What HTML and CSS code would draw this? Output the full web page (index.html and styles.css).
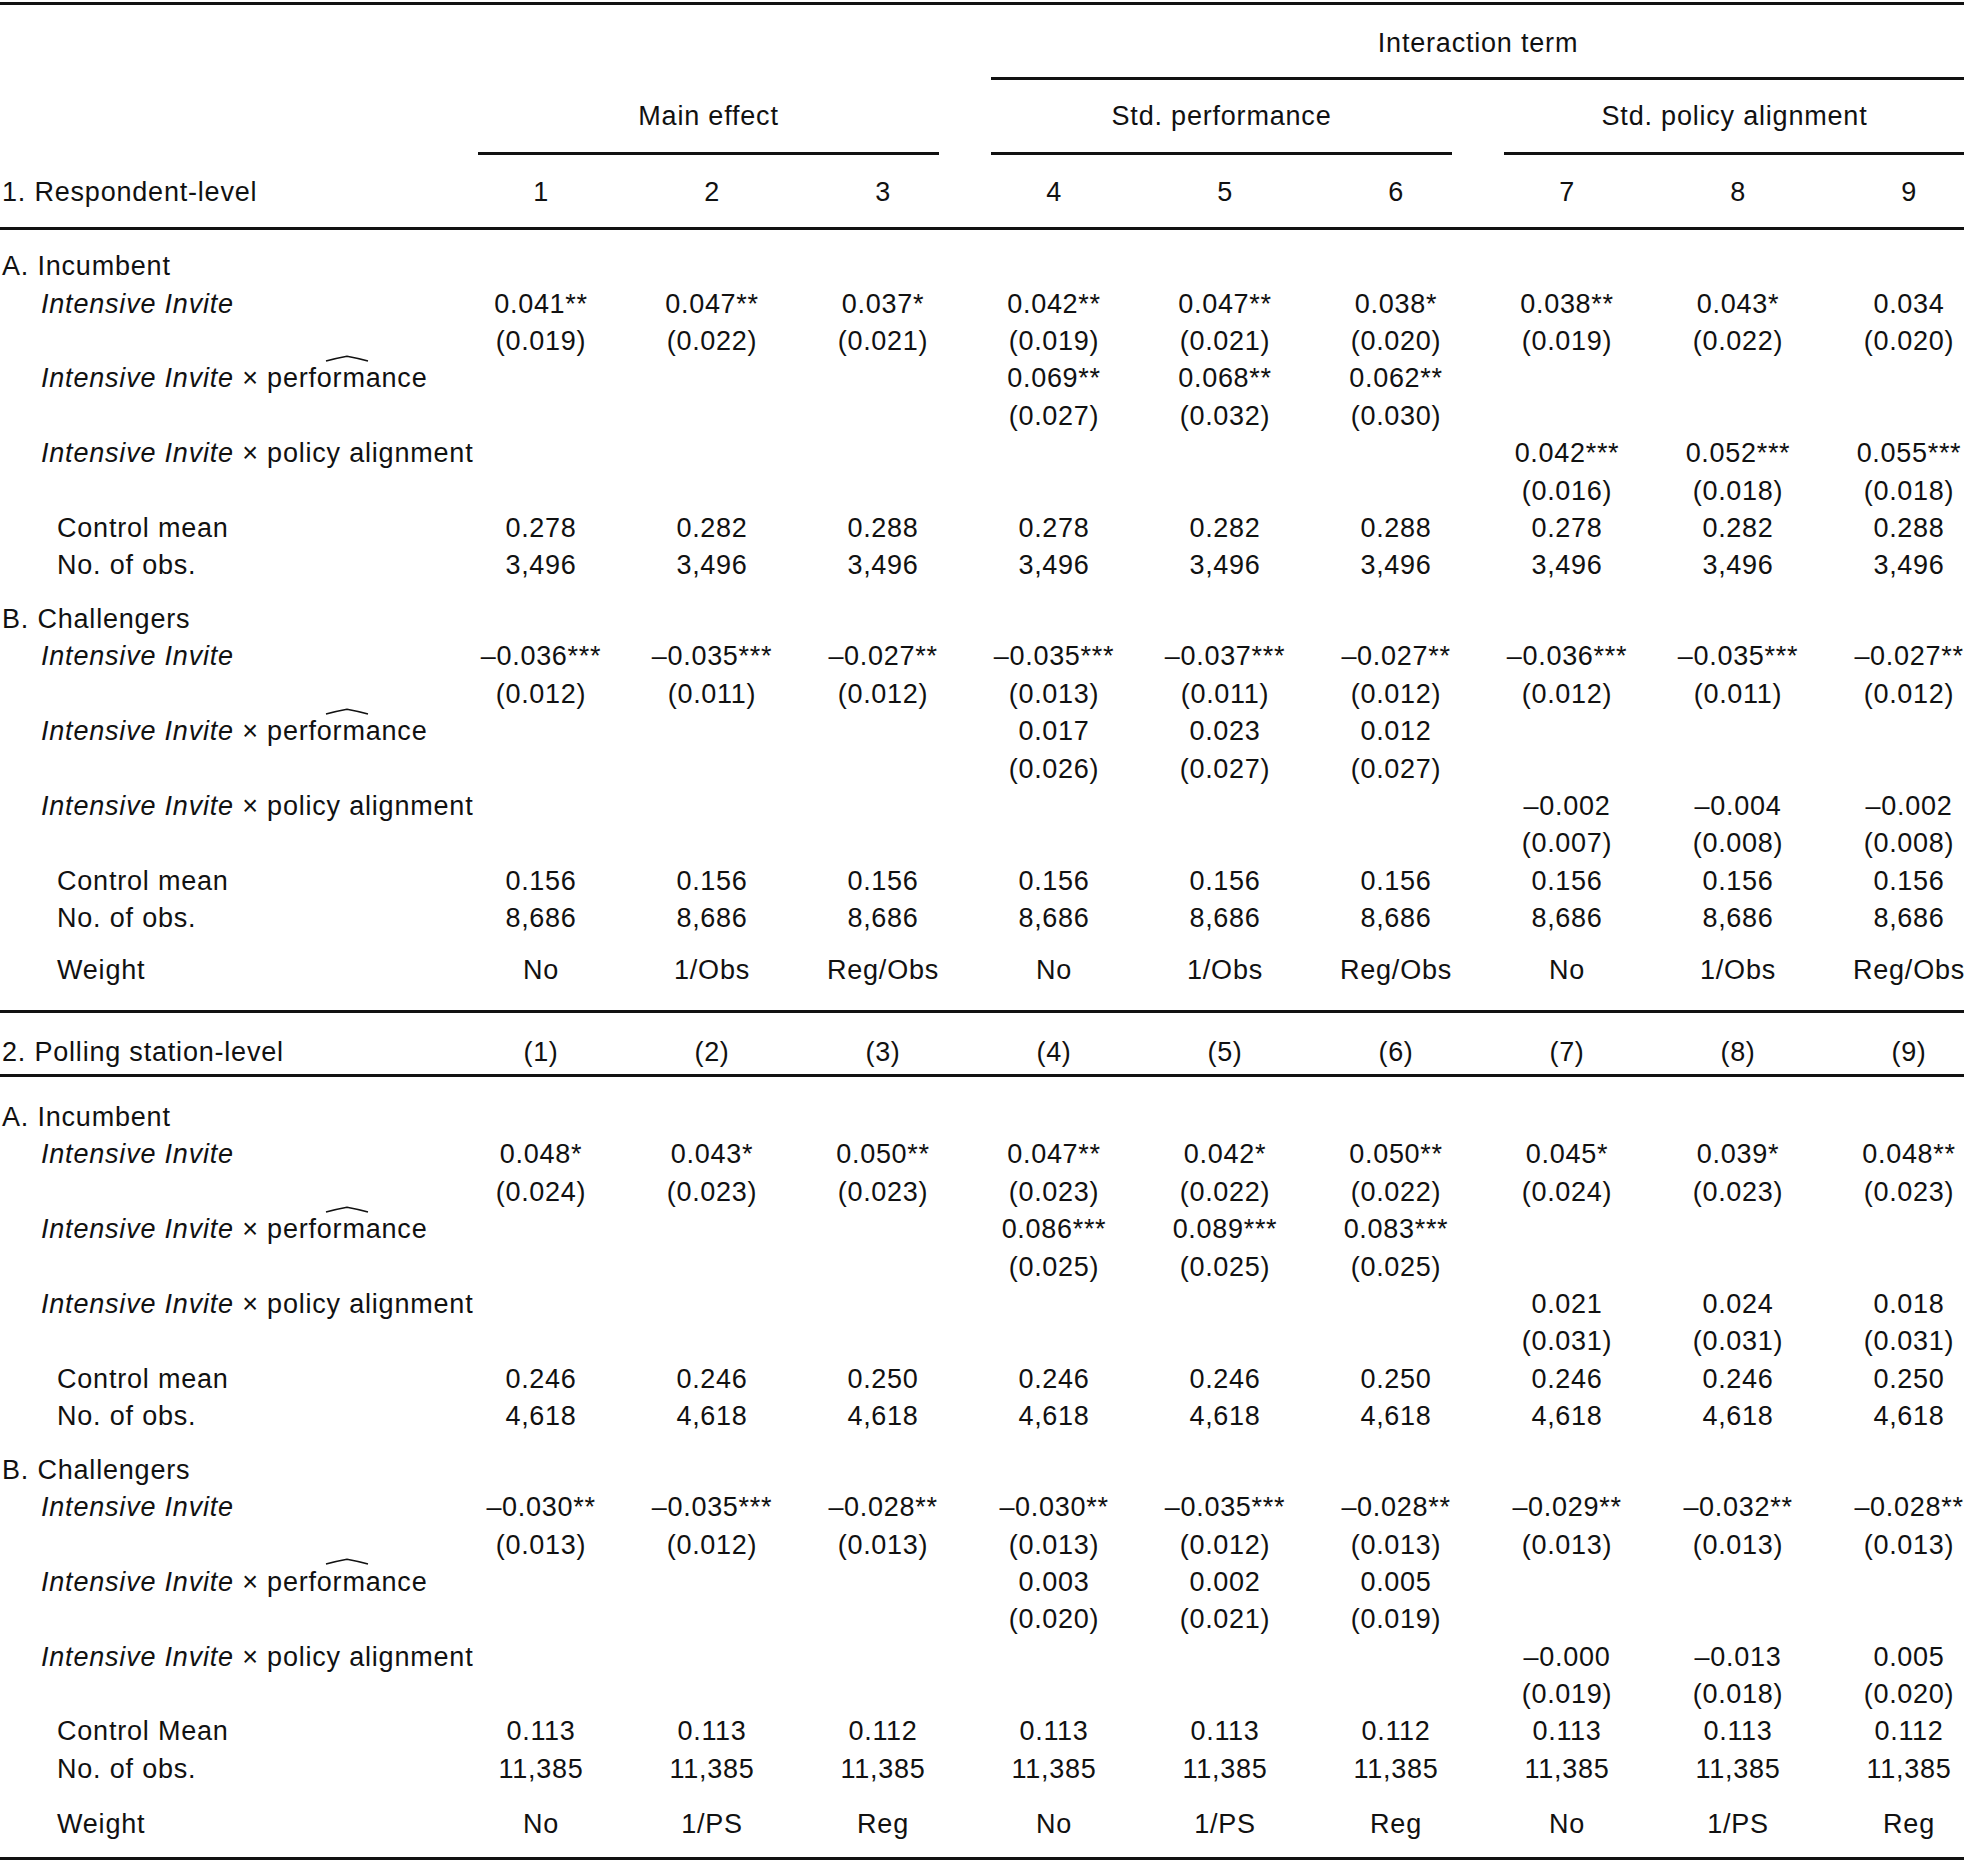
FILE: index.html
```html
<!DOCTYPE html>
<html lang="en">
<head>
<meta charset="utf-8">
<title>Regression table</title>
<link rel="stylesheet" href="styles.css">
</head>
<body>
<div class="table">
  <div class="rule top"></div>

  <div class="hrow h1">
    <div class="grp span-int">Interaction term</div>
  </div>
  <div class="segs s1">
    <div class="seg span-int"></div>
  </div>
  <div class="hrow h2">
    <div class="grp g1">Main effect</div>
    <div class="grp g2">Std. performance</div>
    <div class="grp g3">Std. policy alignment</div>
  </div>
  <div class="segs s2">
    <div class="seg g1"></div>
    <div class="seg g2"></div>
    <div class="seg g3"></div>
  </div>
  <div class="row hnum h3">
    <div class="lab sec txt">1. Respondent-level</div>
    <div class="c">1</div><div class="c">2</div><div class="c">3</div><div class="c">4</div><div class="c">5</div><div class="c">6</div><div class="c">7</div><div class="c">8</div><div class="c">9</div>
  </div>
  <div class="rule"></div>

  <div class="body b1">
    <div class="row"><div class="lab sec txt">A. Incumbent</div></div>
    <div class="row">
      <div class="lab var txt"><i>Intensive Invite</i></div>
      <div class="c">0.041**</div><div class="c">0.047**</div><div class="c">0.037*</div><div class="c">0.042**</div><div class="c">0.047**</div><div class="c">0.038*</div><div class="c">0.038**</div><div class="c">0.043*</div><div class="c">0.034</div>
    </div>
    <div class="row">
      <div class="lab"></div>
      <div class="c">(0.019)</div><div class="c">(0.022)</div><div class="c">(0.021)</div><div class="c">(0.019)</div><div class="c">(0.021)</div><div class="c">(0.020)</div><div class="c">(0.019)</div><div class="c">(0.022)</div><div class="c">(0.020)</div>
    </div>
    <div class="row">
      <div class="lab var txt"><i>Intensive Invite</i> × <span class="perf">performance<svg class="hat" width="44" height="7" viewBox="0 0 44 7"><path d="M1 6 Q11 3.2 22 1.2 Q33 3.2 43 6" /></svg></span></div>
      <div class="c"></div><div class="c"></div><div class="c"></div><div class="c">0.069**</div><div class="c">0.068**</div><div class="c">0.062**</div><div class="c"></div><div class="c"></div><div class="c"></div>
    </div>
    <div class="row">
      <div class="lab"></div>
      <div class="c"></div><div class="c"></div><div class="c"></div><div class="c">(0.027)</div><div class="c">(0.032)</div><div class="c">(0.030)</div><div class="c"></div><div class="c"></div><div class="c"></div>
    </div>
    <div class="row">
      <div class="lab var txt"><i>Intensive Invite</i> × policy alignment</div>
      <div class="c"></div><div class="c"></div><div class="c"></div><div class="c"></div><div class="c"></div><div class="c"></div><div class="c">0.042***</div><div class="c">0.052***</div><div class="c">0.055***</div>
    </div>
    <div class="row">
      <div class="lab"></div>
      <div class="c"></div><div class="c"></div><div class="c"></div><div class="c"></div><div class="c"></div><div class="c"></div><div class="c">(0.016)</div><div class="c">(0.018)</div><div class="c">(0.018)</div>
    </div>
    <div class="row">
      <div class="lab stat txt">Control mean</div>
      <div class="c">0.278</div><div class="c">0.282</div><div class="c">0.288</div><div class="c">0.278</div><div class="c">0.282</div><div class="c">0.288</div><div class="c">0.278</div><div class="c">0.282</div><div class="c">0.288</div>
    </div>
    <div class="row">
      <div class="lab stat txt">No. of obs.</div>
      <div class="c">3,496</div><div class="c">3,496</div><div class="c">3,496</div><div class="c">3,496</div><div class="c">3,496</div><div class="c">3,496</div><div class="c">3,496</div><div class="c">3,496</div><div class="c">3,496</div>
    </div>

    <div class="row gap-b"><div class="lab sec txt">B. Challengers</div></div>
    <div class="row">
      <div class="lab var txt"><i>Intensive Invite</i></div>
      <div class="c">–0.036***</div><div class="c">–0.035***</div><div class="c">–0.027**</div><div class="c">–0.035***</div><div class="c">–0.037***</div><div class="c">–0.027**</div><div class="c">–0.036***</div><div class="c">–0.035***</div><div class="c">–0.027**</div>
    </div>
    <div class="row">
      <div class="lab"></div>
      <div class="c">(0.012)</div><div class="c">(0.011)</div><div class="c">(0.012)</div><div class="c">(0.013)</div><div class="c">(0.011)</div><div class="c">(0.012)</div><div class="c">(0.012)</div><div class="c">(0.011)</div><div class="c">(0.012)</div>
    </div>
    <div class="row">
      <div class="lab var txt"><i>Intensive Invite</i> × <span class="perf">performance<svg class="hat" width="44" height="7" viewBox="0 0 44 7"><path d="M1 6 Q11 3.2 22 1.2 Q33 3.2 43 6" /></svg></span></div>
      <div class="c"></div><div class="c"></div><div class="c"></div><div class="c">0.017</div><div class="c">0.023</div><div class="c">0.012</div><div class="c"></div><div class="c"></div><div class="c"></div>
    </div>
    <div class="row">
      <div class="lab"></div>
      <div class="c"></div><div class="c"></div><div class="c"></div><div class="c">(0.026)</div><div class="c">(0.027)</div><div class="c">(0.027)</div><div class="c"></div><div class="c"></div><div class="c"></div>
    </div>
    <div class="row">
      <div class="lab var txt"><i>Intensive Invite</i> × policy alignment</div>
      <div class="c"></div><div class="c"></div><div class="c"></div><div class="c"></div><div class="c"></div><div class="c"></div><div class="c">–0.002</div><div class="c">–0.004</div><div class="c">–0.002</div>
    </div>
    <div class="row">
      <div class="lab"></div>
      <div class="c"></div><div class="c"></div><div class="c"></div><div class="c"></div><div class="c"></div><div class="c"></div><div class="c">(0.007)</div><div class="c">(0.008)</div><div class="c">(0.008)</div>
    </div>
    <div class="row">
      <div class="lab stat txt">Control mean</div>
      <div class="c">0.156</div><div class="c">0.156</div><div class="c">0.156</div><div class="c">0.156</div><div class="c">0.156</div><div class="c">0.156</div><div class="c">0.156</div><div class="c">0.156</div><div class="c">0.156</div>
    </div>
    <div class="row">
      <div class="lab stat txt">No. of obs.</div>
      <div class="c">8,686</div><div class="c">8,686</div><div class="c">8,686</div><div class="c">8,686</div><div class="c">8,686</div><div class="c">8,686</div><div class="c">8,686</div><div class="c">8,686</div><div class="c">8,686</div>
    </div>
    <div class="row gap-w1">
      <div class="lab stat txt">Weight</div>
      <div class="c txt">No</div><div class="c txt">1/Obs</div><div class="c txt">Reg/Obs</div><div class="c txt">No</div><div class="c txt">1/Obs</div><div class="c txt">Reg/Obs</div><div class="c txt">No</div><div class="c txt">1/Obs</div><div class="c txt">Reg/Obs</div>
    </div>
  </div>

  <div class="rule mid"></div>
  <div class="row h4">
    <div class="lab sec txt">2. Polling station-level</div>
    <div class="c">(1)</div><div class="c">(2)</div><div class="c">(3)</div><div class="c">(4)</div><div class="c">(5)</div><div class="c">(6)</div><div class="c">(7)</div><div class="c">(8)</div><div class="c">(9)</div>
  </div>
  <div class="rule"></div>

  <div class="body b2">
    <div class="row"><div class="lab sec txt">A. Incumbent</div></div>
    <div class="row">
      <div class="lab var txt"><i>Intensive Invite</i></div>
      <div class="c">0.048*</div><div class="c">0.043*</div><div class="c">0.050**</div><div class="c">0.047**</div><div class="c">0.042*</div><div class="c">0.050**</div><div class="c">0.045*</div><div class="c">0.039*</div><div class="c">0.048**</div>
    </div>
    <div class="row">
      <div class="lab"></div>
      <div class="c">(0.024)</div><div class="c">(0.023)</div><div class="c">(0.023)</div><div class="c">(0.023)</div><div class="c">(0.022)</div><div class="c">(0.022)</div><div class="c">(0.024)</div><div class="c">(0.023)</div><div class="c">(0.023)</div>
    </div>
    <div class="row">
      <div class="lab var txt"><i>Intensive Invite</i> × <span class="perf">performance<svg class="hat" width="44" height="7" viewBox="0 0 44 7"><path d="M1 6 Q11 3.2 22 1.2 Q33 3.2 43 6" /></svg></span></div>
      <div class="c"></div><div class="c"></div><div class="c"></div><div class="c">0.086***</div><div class="c">0.089***</div><div class="c">0.083***</div><div class="c"></div><div class="c"></div><div class="c"></div>
    </div>
    <div class="row">
      <div class="lab"></div>
      <div class="c"></div><div class="c"></div><div class="c"></div><div class="c">(0.025)</div><div class="c">(0.025)</div><div class="c">(0.025)</div><div class="c"></div><div class="c"></div><div class="c"></div>
    </div>
    <div class="row">
      <div class="lab var txt"><i>Intensive Invite</i> × policy alignment</div>
      <div class="c"></div><div class="c"></div><div class="c"></div><div class="c"></div><div class="c"></div><div class="c"></div><div class="c">0.021</div><div class="c">0.024</div><div class="c">0.018</div>
    </div>
    <div class="row">
      <div class="lab"></div>
      <div class="c"></div><div class="c"></div><div class="c"></div><div class="c"></div><div class="c"></div><div class="c"></div><div class="c">(0.031)</div><div class="c">(0.031)</div><div class="c">(0.031)</div>
    </div>
    <div class="row">
      <div class="lab stat txt">Control mean</div>
      <div class="c">0.246</div><div class="c">0.246</div><div class="c">0.250</div><div class="c">0.246</div><div class="c">0.246</div><div class="c">0.250</div><div class="c">0.246</div><div class="c">0.246</div><div class="c">0.250</div>
    </div>
    <div class="row">
      <div class="lab stat txt">No. of obs.</div>
      <div class="c">4,618</div><div class="c">4,618</div><div class="c">4,618</div><div class="c">4,618</div><div class="c">4,618</div><div class="c">4,618</div><div class="c">4,618</div><div class="c">4,618</div><div class="c">4,618</div>
    </div>

    <div class="row gap-b"><div class="lab sec txt">B. Challengers</div></div>
    <div class="row">
      <div class="lab var txt"><i>Intensive Invite</i></div>
      <div class="c">–0.030**</div><div class="c">–0.035***</div><div class="c">–0.028**</div><div class="c">–0.030**</div><div class="c">–0.035***</div><div class="c">–0.028**</div><div class="c">–0.029**</div><div class="c">–0.032**</div><div class="c">–0.028**</div>
    </div>
    <div class="row">
      <div class="lab"></div>
      <div class="c">(0.013)</div><div class="c">(0.012)</div><div class="c">(0.013)</div><div class="c">(0.013)</div><div class="c">(0.012)</div><div class="c">(0.013)</div><div class="c">(0.013)</div><div class="c">(0.013)</div><div class="c">(0.013)</div>
    </div>
    <div class="row">
      <div class="lab var txt"><i>Intensive Invite</i> × <span class="perf">performance<svg class="hat" width="44" height="7" viewBox="0 0 44 7"><path d="M1 6 Q11 3.2 22 1.2 Q33 3.2 43 6" /></svg></span></div>
      <div class="c"></div><div class="c"></div><div class="c"></div><div class="c">0.003</div><div class="c">0.002</div><div class="c">0.005</div><div class="c"></div><div class="c"></div><div class="c"></div>
    </div>
    <div class="row">
      <div class="lab"></div>
      <div class="c"></div><div class="c"></div><div class="c"></div><div class="c">(0.020)</div><div class="c">(0.021)</div><div class="c">(0.019)</div><div class="c"></div><div class="c"></div><div class="c"></div>
    </div>
    <div class="row">
      <div class="lab var txt"><i>Intensive Invite</i> × policy alignment</div>
      <div class="c"></div><div class="c"></div><div class="c"></div><div class="c"></div><div class="c"></div><div class="c"></div><div class="c">–0.000</div><div class="c">–0.013</div><div class="c">0.005</div>
    </div>
    <div class="row">
      <div class="lab"></div>
      <div class="c"></div><div class="c"></div><div class="c"></div><div class="c"></div><div class="c"></div><div class="c"></div><div class="c">(0.019)</div><div class="c">(0.018)</div><div class="c">(0.020)</div>
    </div>
    <div class="row">
      <div class="lab stat txt">Control Mean</div>
      <div class="c">0.113</div><div class="c">0.113</div><div class="c">0.112</div><div class="c">0.113</div><div class="c">0.113</div><div class="c">0.112</div><div class="c">0.113</div><div class="c">0.113</div><div class="c">0.112</div>
    </div>
    <div class="row">
      <div class="lab stat txt">No. of obs.</div>
      <div class="c">11,385</div><div class="c">11,385</div><div class="c">11,385</div><div class="c">11,385</div><div class="c">11,385</div><div class="c">11,385</div><div class="c">11,385</div><div class="c">11,385</div><div class="c">11,385</div>
    </div>
    <div class="row gap-w2">
      <div class="lab stat txt">Weight</div>
      <div class="c txt">No</div><div class="c txt">1/PS</div><div class="c txt">Reg</div><div class="c txt">No</div><div class="c txt">1/PS</div><div class="c txt">Reg</div><div class="c txt">No</div><div class="c txt">1/PS</div><div class="c txt">Reg</div>
    </div>
  </div>

  <div class="rule bottom"></div>
</div>
</body>
</html>
```

FILE: styles.css
```css
html, body {
  margin: 0;
  padding: 0;
  background: #ffffff;
}

body {
  font-family: "Liberation Sans", Arial, sans-serif;
  font-size: 27px;
  color: #111111;
}

.table {
  width: 1964px;
  overflow: hidden;
  padding-top: 2px;
  padding-bottom: 2px;
}

.rule {
  height: 3px;
  background: #111111;
  width: 1964px;
}

.rule.mid {
  margin-top: 20.3px;
}

.rule.bottom {
  margin-top: 13.6px;
}

/* shared column grid */
.row,
.hrow,
.segs {
  display: grid;
  grid-template-columns: 455.5px repeat(9, 171px);
  width: 1994.5px;
}

.row {
  height: 37.4px;
  line-height: 37.4px;
  white-space: nowrap;
}

.c {
  text-align: center;
  white-space: nowrap;
  letter-spacing: 0.7px;
}

.txt,
.c.txt {
  letter-spacing: 0.8px;
}

.lab {
  grid-column: 1;
  white-space: nowrap;
}

.lab.sec {
  padding-left: 2px;
}

.lab.var {
  padding-left: 41px;
}

.lab.stat {
  padding-left: 57px;
}

.lab i {
  font-style: italic;
}

/* header rows */
.hrow {
  white-space: nowrap;
}

.grp {
  text-align: center;
  letter-spacing: 0.8px;
  margin-left: 22.5px;
  margin-right: 29.5px;
}

.h1 {
  height: 68.3px;
  padding-top: 4px;
  line-height: 68.3px;
}

.h2 {
  height: 69.7px;
  padding-top: 2px;
  line-height: 69.7px;
}

.span-int {
  grid-column: 5 / 11;
}

.g1 {
  grid-column: 2 / 5;
}

.g2 {
  grid-column: 5 / 8;
}

.g3 {
  grid-column: 8 / 11;
}

.segs {
  height: 3px;
}

.seg {
  height: 3px;
  background: #111111;
  margin-left: 22.5px;
  margin-right: 29.5px;
}

.h3 {
  height: 68.4px;
  line-height: 68.4px;
  padding-top: 3.3px;
}

.h4 {
  margin-top: 21.1px;
  margin-bottom: 3.2px;
}

.body.b1 {
  padding-top: 18.6px;
}

.body.b2 {
  padding-top: 21.6px;
}

.gap-b {
  margin-top: 16.2px;
}

.gap-w1 {
  margin-top: 14.6px;
}

.gap-w2 {
  margin-top: 17.4px;
}

/* estimated-quantity hat over "performance" */
.perf {
  position: relative;
}

.hat {
  position: absolute;
  left: 58px;
  top: -8.5px;
  overflow: visible;
}

.hat path {
  fill: none;
  stroke: #111111;
  stroke-width: 1.4;
  stroke-linejoin: round;
}
```
